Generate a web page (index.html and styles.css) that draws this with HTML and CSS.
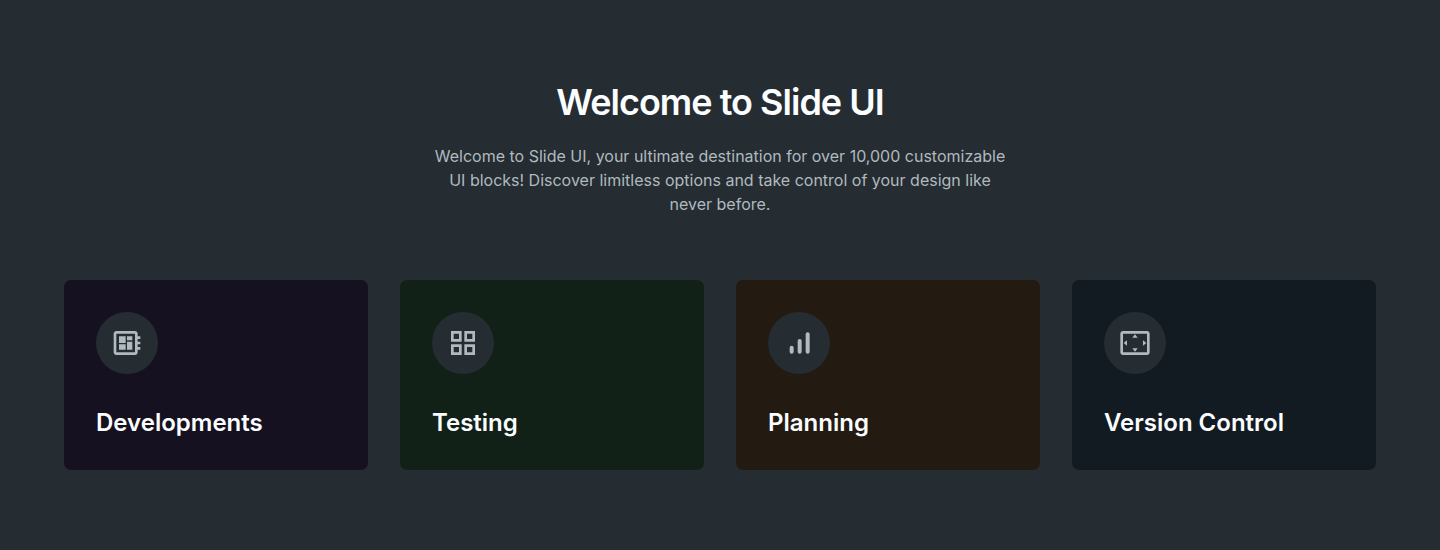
FILE: index.html
```html
<!DOCTYPE html>
<html lang="en">
<head>
<meta charset="utf-8">
<title>Slide UI</title>
<link rel="stylesheet" href="styles.css">
</head>
<body>
<section class="features">
  <header class="intro">
    <h1 class="title">Welcome to Slide UI</h1>
    <p class="lead">Welcome to Slide UI, your ultimate destination for over 10,000 customizable UI blocks! Discover limitless options and take control of your design like never before.</p>
  </header>
  <div class="cards">
    <article class="card card-purple">
      <span class="badge"><svg class="icon" viewBox="0 0 24 24"><path d="M22 9V7h-2V5c0-1.1-.9-2-2-2H4c-1.1 0-2 .9-2 2v14c0 1.1.9 2 2 2h14c1.1 0 2-.9 2-2v-2h2v-2h-2v-2h2v-2h-2V9h2zm-4 10H4V5h14v14zM6 13h5v4H6v-4zm6-6h4v3h-4V7zM6 7h5v5H6V7zm6 4h4v6h-4v-6z"/></svg></span>
      <h2 class="card-title">Developments</h2>
    </article>
    <article class="card card-green">
      <span class="badge"><svg class="icon" viewBox="0 0 24 24"><path d="M3 3v8h8V3H3zm6 6H5V5h4v4zm-6 4v8h8v-8H3zm6 6H5v-4h4v4zm4-16v8h8V3h-8zm6 6h-4V5h4v4zm-6 4v8h8v-8h-8zm6 6h-4v-4h4v4z"/></svg></span>
      <h2 class="card-title">Testing</h2>
    </article>
    <article class="card card-brown">
      <span class="badge"><svg class="icon" viewBox="0 0 24 24"><rect x="5" y="14" width="3" height="6" rx="1.5"/><rect x="11" y="9" width="3" height="11" rx="1.5"/><rect x="17" y="4" width="3" height="16" rx="1.5"/></svg></span>
      <h2 class="card-title">Planning</h2>
    </article>
    <article class="card card-blue">
      <span class="badge"><svg class="icon" viewBox="0 0 24 24"><path d="M12.01 5.5 10 8h4l-1.99-2.5zM18 10v4l2.5-1.99L18 10zM6 10l-2.5 2.01L6 14v-4zm8 6h-4l2.01 2.5L14 16zm7-13H3c-1.1 0-2 .9-2 2v14c0 1.1.9 2 2 2h18c1.1 0 2-.9 2-2V5c0-1.1-.9-2-2-2zm0 16.01H3V4.99h18v14.02z"/></svg></span>
      <h2 class="card-title">Version Control</h2>
    </article>
  </div>
</section>
</body>
</html>
```
FILE: styles.css
```css
* { box-sizing: border-box; margin: 0; }

body {
  background: #252c32;
  font-family: Inter, sans-serif;
}

.features {
  height: 550px;
  padding: 80px 64px 0;
}

.intro {
  width: 580px;
  margin: 0 auto 64px;
  text-align: center;
}

.title {
  margin-bottom: 20px;
  color: #fbfdff;
  font-size: 36px;
  font-weight: 600;
  line-height: 44px;
  letter-spacing: -0.98px;
}

.lead {
  color: #b0babf;
  font-size: 16px;
  font-weight: 400;
  line-height: 24px;
}

.cards {
  display: grid;
  grid-template-columns: repeat(4, 1fr);
  gap: 32px;
}

.card {
  height: 190px;
  padding: 32px;
  border-radius: 7px;
}

.card-purple { background: #161120; }
.card-green { background: #122117; }
.card-brown { background: #231a12; }
.card-blue { background: #131b22; }

.badge {
  display: flex;
  align-items: center;
  justify-content: center;
  width: 62px;
  height: 62px;
  margin-bottom: 33px;
  border-radius: 50%;
  background: #252c32;
}

.icon {
  width: 32px;
  height: 32px;
  fill: #b0babf;
}

.card-title {
  color: #fbfdff;
  font-size: 24px;
  font-weight: 600;
  line-height: 32px;
}
```
